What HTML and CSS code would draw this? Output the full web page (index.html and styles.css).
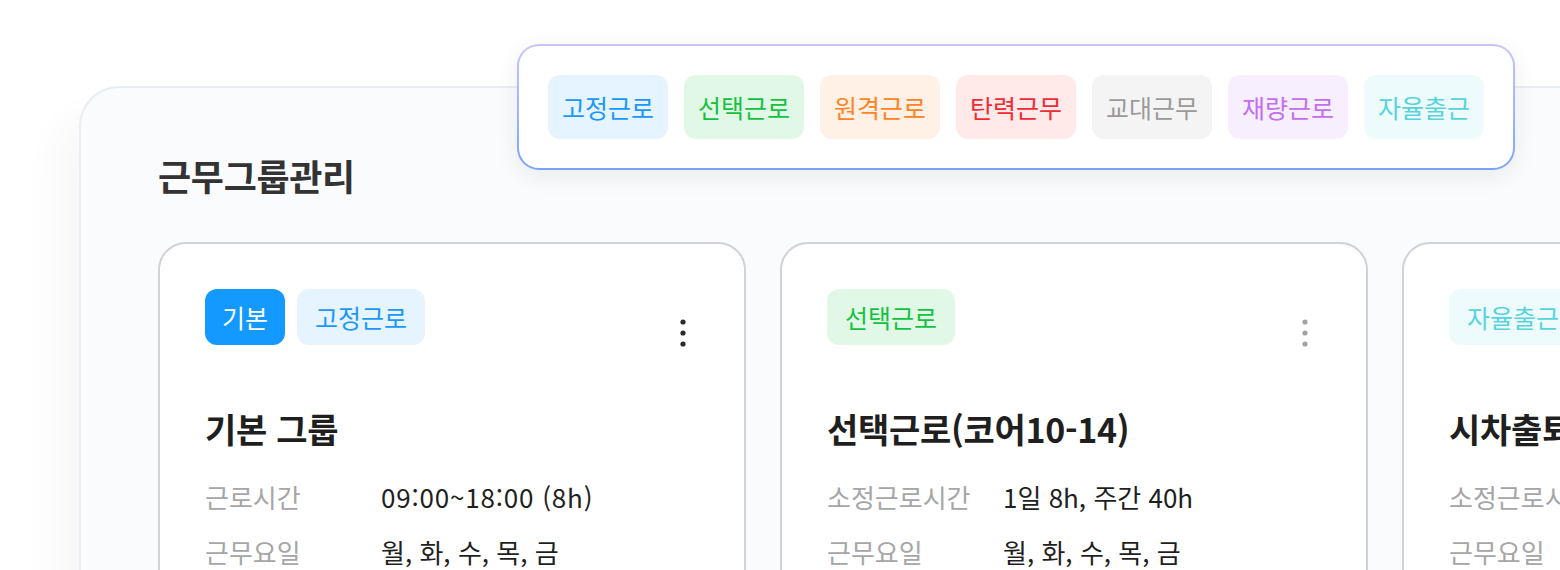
FILE: index.html
```html
<!DOCTYPE html>
<html lang="ko">
<head>
<meta charset="utf-8">
<title>근무그룹관리</title>
<link rel="stylesheet" href="styles.css">
</head>
<body>
<div class="page">
  <section class="panel">
    <h1 class="panel-title">근무그룹관리</h1>
    <div class="cards">
      <article class="card">
        <div class="card-head">
          <div class="tags">
            <span class="tag tag-default">기본</span>
            <span class="tag t-fixed">고정근로</span>
          </div>
          <button class="kebab kebab-dark" aria-label="더보기">
            <svg width="30" height="32" viewBox="0 0 30 32"><circle cx="15" cy="5" r="2.6"/><circle cx="15" cy="16" r="2.6"/><circle cx="15" cy="27" r="2.6"/></svg>
          </button>
        </div>
        <h2 class="card-title">기본 그룹</h2>
        <dl class="info">
          <dt>근로시간</dt><dd class="time">09:00~18:00 (8h)</dd>
          <dt>근무요일</dt><dd>월, 화, 수, 목, 금</dd>
        </dl>
      </article>
      <article class="card">
        <div class="card-head">
          <div class="tags">
            <span class="tag t-select">선택근로</span>
          </div>
          <button class="kebab kebab-light" aria-label="더보기">
            <svg width="30" height="32" viewBox="0 0 30 32"><circle cx="15" cy="5" r="2.6"/><circle cx="15" cy="16" r="2.6"/><circle cx="15" cy="27" r="2.6"/></svg>
          </button>
        </div>
        <h2 class="card-title">선택근로(코어10-14)</h2>
        <dl class="info">
          <dt>소정근로시간</dt><dd>1일 8h, 주간 40h</dd>
          <dt>근무요일</dt><dd>월, 화, 수, 목, 금</dd>
        </dl>
      </article>
      <article class="card">
        <div class="card-head">
          <div class="tags">
            <span class="tag t-free">자율출근</span>
          </div>
          <button class="kebab kebab-light" aria-label="더보기">
            <svg width="30" height="32" viewBox="0 0 30 32"><circle cx="15" cy="5" r="2.6"/><circle cx="15" cy="16" r="2.6"/><circle cx="15" cy="27" r="2.6"/></svg>
          </button>
        </div>
        <h2 class="card-title">시차출퇴근제</h2>
        <dl class="info">
          <dt>소정근로시간</dt><dd>1일 8h, 주간 40h</dd>
          <dt>근무요일</dt><dd>월, 화, 수, 목, 금</dd>
        </dl>
      </article>
    </div>
  </section>

  <div class="legend">
    <span class="tag ltag t-fixed">고정근로</span>
    <span class="tag ltag t-select">선택근로</span>
    <span class="tag ltag t-remote">원격근로</span>
    <span class="tag ltag t-flex">탄력근무</span>
    <span class="tag ltag t-shift">교대근무</span>
    <span class="tag ltag t-disc">재량근로</span>
    <span class="tag ltag t-free">자율출근</span>
  </div>
</div>
</body>
</html>
```

FILE: styles.css
```css
* { box-sizing: border-box; }

html, body {
  margin: 0;
  padding: 0;
  background: #ffffff;
}

body {
  width: 1560px;
  height: 570px;
  overflow: hidden;
  font-family: "Noto Sans CJK KR", "Noto Sans", sans-serif;
  color: #222;
}

.page {
  position: relative;
  padding: 86px 0 0 79px;
}

.panel {
  width: 1720px;
  min-height: 600px;
  background: #f9fbfd;
  border: 2px solid #e7eef6;
  border-right: none;
  border-radius: 40px 0 0 0;
  padding: 65px 0 0 77px;
  box-shadow: -22px 30px 40px rgba(0, 0, 0, 0.035);
}

.panel-title {
  margin: 0;
  font-size: 36px;
  line-height: 44px;
  font-weight: 700;
  color: #333;
  letter-spacing: -0.3px;
}

.cards {
  display: flex;
  gap: 34px;
  margin-top: 45px;
}

.card {
  flex: 0 0 588px;
  min-height: 400px;
  background: #fff;
  border: 2px solid #d1d2d7;
  border-radius: 28px;
  padding: 45px 46px 0 45px;
}

.card-head {
  display: flex;
  justify-content: space-between;
  align-items: flex-start;
}

.tags {
  display: flex;
  gap: 12px;
}

.tag {
  display: inline-block;
  height: 56px;
  line-height: 56px;
  padding: 0 18px;
  border-radius: 12px;
  font-size: 25px;
  white-space: nowrap;
}

.tag-default { background: #1399ff; color: #fff; padding: 0 17px; }
.t-fixed  { background: #e6f4ff; color: #1a98fa; }
.t-select { background: #e2f8e7; color: #14c241; }
.t-remote { background: #fff1e6; color: #ff8426; }
.t-flex   { background: #ffe9e9; color: #ef2c35; }
.t-shift  { background: #f4f4f5; color: #9a9a9a; }
.t-disc   { background: #f7eefe; color: #c36ff0; }
.t-free   { background: #eefbfd; color: #57d3dc; }

.kebab {
  margin-top: 28px;
  padding: 0;
  border: none;
  background: none;
  width: 30px;
  height: 32px;
  display: block;
}
.kebab svg { display: block; }
.kebab-dark svg { fill: #2b2b2b; }
.kebab-light svg { fill: #a3a3a3; }

.card-title {
  margin: 58px 0 0 0;
  font-size: 34px;
  line-height: 44px;
  font-weight: 700;
  color: #1f1f1f;
  letter-spacing: -0.3px;
  white-space: nowrap;
}

.info {
  margin: 28px 0 0 0;
  display: grid;
  grid-template-columns: 176px 1fr;
  row-gap: 19px;
  font-size: 26px;
  line-height: 36px;
}

.info dt {
  color: #a6a6a6;
  white-space: nowrap;
}

.info dd {
  margin: 0;
  color: #1f1f1f;
  white-space: nowrap;
}

.info dd.time {
  letter-spacing: 0.8px;
}

.legend {
  position: absolute;
  left: 517px;
  top: 44px;
  width: 998px;
  height: 126px;
  display: flex;
  gap: 16px;
  padding: 29px;
  border: 2px solid transparent;
  border-radius: 22px;
  background:
    linear-gradient(#fff, #fff) padding-box,
    linear-gradient(to bottom, #cbc5f9, #9fb3f9 55%, #78a5f8) border-box;
  box-shadow: 0 6px 24px rgba(0, 0, 0, 0.07);
}

.ltag {
  height: 64px;
  line-height: 64px;
  padding: 0 14px;
}
```
